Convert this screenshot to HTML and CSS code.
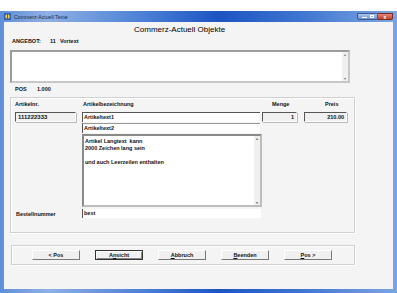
FILE: index.html
```html
<!DOCTYPE html>
<html lang="de">
<head>
    <meta charset="UTF-8">
    <meta name="viewport" content="width=device-width, initial-scale=1.0">
    <title>Commerz-Actuell Texte</title>
    <link rel="stylesheet" href="styles.css">
</head>
<body>
    <div class="window">
        <div class="titlebar">
            <svg class="app-icon" width="7" height="7" viewBox="0 0 7 7">
                <rect x="0" y="0" width="7" height="7" fill="#2d5fb8"/>
                <circle cx="3.5" cy="3.5" r="2.2" fill="#f2d24a"/>
                <rect x="3" y="1" width="1" height="5" fill="#c0392b"/>
            </svg>
            <span class="title">Commerz-Actuell Texte</span>
            <div class="caption-btns">
                <span class="cap minmax"><i class="min"></i><i class="max"></i></span>
                <span class="cap close">x</span>
            </div>
        </div>

        <div class="client">
            <h1 class="heading">Commerz-Actuell Objekte</h1>

            <div class="info-row angebot">
                <span class="w-label">ANGEBOT:</span>
                <span class="w-nr">11</span>
                <span>Vortext</span>
            </div>

            <div class="memo vortext">
                <div class="scroll"><span>&#9652;</span><span>&#9662;</span></div>
            </div>

            <div class="info-row pos">
                <span class="w-pos">POS</span>
                <span>1.000</span>
            </div>

            <div class="group artikel">
                <div class="lbl">Artikelnr.</div>
                <div class="lbl c2">Artikelbezeichnung</div>
                <div class="lbl c3">Menge</div>
                <div class="lbl c4">Preis</div>

                <div class="field ro artnr">111222333</div>
                <div class="field c2">Artikeltext1</div>
                <div class="field ro num c3">1</div>
                <div class="field ro num c4">210.00</div>

                <div class="field c2 second">Artikeltext2</div>

                <div class="memo langtext c2">
                    <div class="memo-text">Artikel Langtext&nbsp; kann<br>2000 Zeichen lang sein<br><br>und auch Leerzeilen enthalten</div>
                    <div class="scroll"><span>&#9652;</span><span>&#9662;</span></div>
                </div>

                <div class="lbl bestell">Bestellnummer</div>
                <div class="field c2 bestell-field">best</div>
            </div>

            <div class="group buttons">
                <button class="btn">&lt; Pos</button>
                <button class="btn default">A<u>n</u>sicht</button>
                <button class="btn"><u>A</u>bbruch</button>
                <button class="btn"><u>B</u>eenden</button>
                <button class="btn"><u>P</u>os &gt;</button>
            </div>
        </div>
    </div>
</body>
</html>
```

FILE: styles.css
```css
body {
    margin: 0;
    background: #fff;
    font-family: "Liberation Sans", Arial, sans-serif;
    color: #111;
}

.window {
    margin-top: 11px;
    width: 397px;
    height: 282px;
    box-sizing: border-box;
    padding: 0 4px 4px 4px;
    display: flex;
    flex-direction: column;
    background: linear-gradient(to right, #5f8ed8 0%, #8fb0e6 12%, #4f82d6 35%, #1d54c2 55%, #3d74d0 75%, #7ea5e2 100%);
}

.titlebar {
    height: 11px;
    display: flex;
    align-items: center;
}

.app-icon {
    margin-right: 3px;
}

.title {
    font-size: 5.2px;
    color: #1a2a44;
}

.caption-btns {
    margin-left: auto;
    display: flex;
    align-self: flex-start;
    margin-top: 2px;
}

.cap {
    height: 7px;
    border: 1px solid #3b5a8e;
    box-sizing: border-box;
    display: flex;
    align-items: center;
    justify-content: center;
}

.minmax {
    width: 21px;
    background: linear-gradient(#a9c3ea, #6c93d2);
    border-radius: 0 0 0 2px;
    gap: 3px;
}

.min {
    width: 5px;
    height: 1px;
    background: #fff;
    margin-top: 2px;
}

.max {
    width: 4px;
    height: 3px;
    border: 1px solid #fff;
    box-sizing: border-box;
}

.close {
    width: 15px;
    background: linear-gradient(#e28a7c, #c2402f);
    border-color: #7d2a20;
    border-left: none;
    border-radius: 0 0 2px 0;
    color: #fff;
    font-size: 5px;
    font-weight: bold;
}

.client {
    flex: 1;
    background: #f4f4f4;
    padding-left: 6px;
}

.heading {
    margin: 3px 0 0 124px;
    font-size: 8px;
    font-weight: normal;
    line-height: 10px;
    color: #000;
}

.info-row {
    font-size: 5.5px;
    font-weight: bold;
    line-height: 8px;
    display: flex;
}

.angebot {
    margin-top: 2px;
    padding-left: 2px;
}

.w-label { width: 38px; }
.w-nr { width: 10px; }

.pos {
    margin-top: 2px;
    padding-left: 5px;
}

.w-pos { width: 22px; }

.memo {
    background: #fff;
    border: 2px solid #9c9c9c;
    border-right-color: #c8c8c8;
    border-bottom-color: #c8c8c8;
    box-sizing: border-box;
    display: flex;
}

.vortext {
    margin-top: 5px;
    width: 340px;
    height: 33px;
}

.scroll {
    margin-left: auto;
    width: 6px;
    background: #f0f0f0;
    display: flex;
    flex-direction: column;
    justify-content: space-between;
    align-items: center;
    font-size: 4px;
    line-height: 5px;
    color: #777;
}

.group {
    border: 1px solid #d0d0d0;
    box-shadow: inset 1px 1px 0 #fff, 1px 1px 0 #fff;
    box-sizing: border-box;
}

.artikel {
    margin-top: 4px;
    width: 345px;
    height: 136px;
    padding: 3px 0 0 4px;
    display: grid;
    grid-template-columns: 67px 180px 42px 43px;
    grid-template-rows: 10px 10px 10px 73px 10px;
    row-gap: 1px;
    font-size: 5.5px;
    font-weight: bold;
}

.lbl {
    line-height: 7px;
}

.c2 { grid-column: 2; }
.c3 { grid-column: 3; }
.c4 { grid-column: 4; }

.lbl.c2 { padding-left: 1px; }
.lbl.c3 { padding-left: 10px; }
.lbl.c4 { padding-left: 21px; }

.field {
    background: #fff;
    border-top: 1px solid #555;
    border-left: 1px solid #555;
    line-height: 9px;
    padding-left: 1px;
    box-sizing: border-box;
    width: 178px;
}

.field.ro {
    background: #f0f0f0;
    border-right: 1px solid #fff;
    border-bottom: 1px solid #fff;
    box-shadow: 1px 1px 0 #bbb;
}

.artnr {
    width: 61px;
    font-size: 6px;
    padding-left: 2px;
}

.field.num {
    text-align: right;
    padding-right: 2px;
}

.field.c3 { width: 35px; }
.field.c4 { width: 43px; }

.second {
    grid-row: 3;
    border-top-color: #999;
}

.langtext {
    grid-row: 4;
    width: 180px;
    border-color: #8a8a8a;
    border-right-color: #bdbdbd;
    border-bottom-color: #bdbdbd;
}

.memo-text {
    padding: 2px 0 0 1px;
    line-height: 7px;
}

.bestell {
    grid-row: 5;
    grid-column: 1;
    margin-top: 1px;
    padding: 2px 0 0 1px;
}

.bestell-field {
    grid-row: 5;
    margin-top: 1px;
    border-top: none;
    width: 179px;
}

.buttons {
    margin: 12px 0 0 1px;
    width: 344px;
    height: 20px;
    padding: 4px 0 0 20px;
    display: flex;
    gap: 15px;
}

.btn {
    width: 48px;
    height: 10px;
    padding: 0;
    background: #f0f0f0;
    border: 1px solid;
    border-color: #fff #777 #777 #fff;
    font-family: "Liberation Sans", Arial, sans-serif;
    font-size: 5.5px;
    font-weight: bold;
    color: #111;
    line-height: 8px;
    box-sizing: border-box;
}

.btn.default {
    border: 1px solid #333;
    box-shadow: inset 1px 1px 0 #fff, inset -1px -1px 0 #888;
}
```
